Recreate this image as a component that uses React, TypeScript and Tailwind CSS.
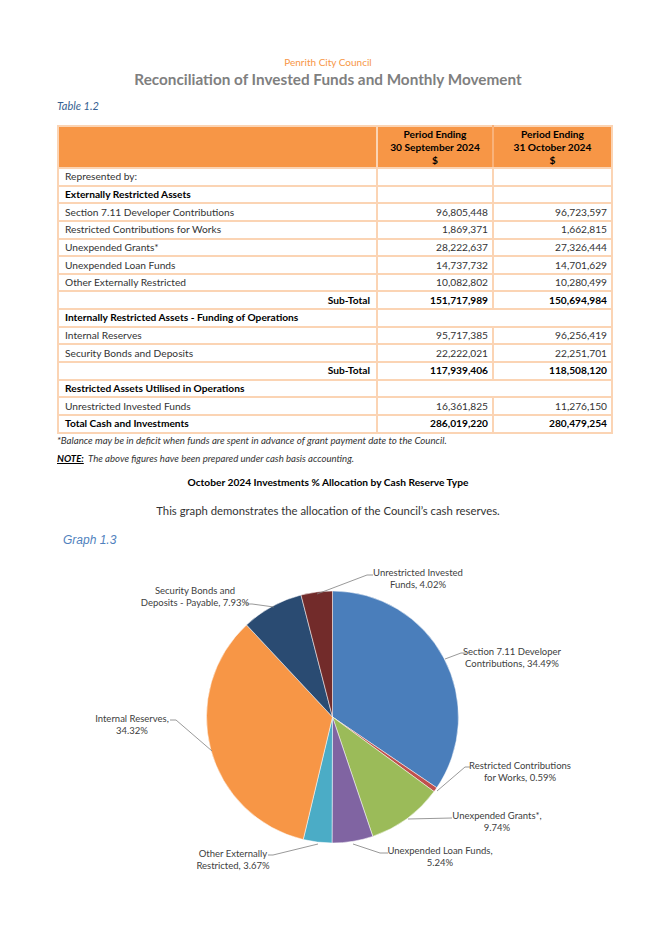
import React from "react";

type Row = {
  label: string;
  sep?: string;
  oct?: string;
  kind?: "plain" | "heading" | "headingWide" | "subtotal" | "total";
};

const rows: Row[] = [
  { label: "Represented by:", kind: "plain" },
  { label: "Externally Restricted Assets", kind: "heading" },
  { label: "Section 7.11 Developer Contributions", sep: "96,805,448", oct: "96,723,597" },
  { label: "Restricted Contributions for Works", sep: "1,869,371", oct: "1,662,815" },
  { label: "Unexpended Grants*", sep: "28,222,637", oct: "27,326,444" },
  { label: "Unexpended Loan Funds", sep: "14,737,732", oct: "14,701,629" },
  { label: "Other Externally Restricted", sep: "10,082,802", oct: "10,280,499" },
  { label: "Sub-Total", sep: "151,717,989", oct: "150,694,984", kind: "subtotal" },
  { label: "Internally Restricted Assets - Funding of Operations", kind: "headingWide" },
  { label: "Internal Reserves", sep: "95,717,385", oct: "96,256,419" },
  { label: "Security Bonds and Deposits", sep: "22,222,021", oct: "22,251,701" },
  { label: "Sub-Total", sep: "117,939,406", oct: "118,508,120", kind: "subtotal" },
  { label: "Restricted Assets Utilised in Operations", kind: "headingWide" },
  { label: "Unrestricted Invested Funds", sep: "16,361,825", oct: "11,276,150" },
  { label: "Total Cash and Investments", sep: "286,019,220", oct: "280,479,254", kind: "total" },
];

const slices = [
  { v: 34.49, c: "#4a7ebb" },
  { v: 0.59, c: "#c0504d" },
  { v: 9.74, c: "#9bbb59" },
  { v: 5.24, c: "#8064a2" },
  { v: 3.67, c: "#4bacc6" },
  { v: 34.32, c: "#f79646" },
  { v: 7.93, c: "#2a4b72" },
  { v: 4.02, c: "#722b2a" },
];

// label text lines, centre x, baselines, leader line
const labels = [
  { lines: ["Unrestricted Invested", "Funds, 4.02%"], x: 418, y: 574, lead: "373,573 367,573 317,592" },
  { lines: ["Security Bonds and", "Deposits - Payable, 7.93%"], x: 195, y: 592, lead: "246,602 252,602 274,605" },
  { lines: ["Section 7.11 Developer", "Contributions, 34.49%"], x: 512, y: 653, lead: "466,651 461,651 445,657" },
  { lines: ["Internal Reserves,", "34.32%"], x: 132, y: 720, lead: "170,718 176,718 212,749" },
  { lines: ["Restricted Contributions", "for Works, 0.59%"], x: 520, y: 767, lead: "470,765 465,765 437,789" },
  { lines: ["Unexpended Grants*,", "9.74%"], x: 497, y: 817, lead: "452,816 408,817" },
  { lines: ["Unexpended Loan Funds,", "5.24%"], x: 440, y: 852, lead: "388,851 380,851 353,842" },
  { lines: ["Other Externally", "Restricted, 3.67%"], x: 233, y: 855, lead: "268,853 273,853 318,842" },
];

function PieChart() {
  const cx = 332.5;
  const cy = 715;
  const r = 126;
  let acc = 0;
  const pt = (f: number) => {
    const a = f * 2 * Math.PI;
    return [cx + r * Math.sin(a), cy - r * Math.cos(a)];
  };
  return (
    <svg className="block" width="656" height="340" viewBox="0 546 656 340">
      {slices.map((s, i) => {
        const f0 = acc / 100;
        acc += s.v;
        const f1 = acc / 100;
        const [x0, y0] = pt(f0);
        const [x1, y1] = pt(f1);
        const large = f1 - f0 > 0.5 ? 1 : 0;
        return (
          <path
            key={i}
            d={`M${cx},${cy} L${x0},${y0} A${r},${r} 0 ${large} 1 ${x1},${y1} Z`}
            fill={s.c}
            stroke="#ffffff"
            strokeWidth="0.5"
          />
        );
      })}
      {labels.map((l, i) => (
        <g key={i}>
          <polyline points={l.lead} fill="none" stroke="#7f7f7f" strokeWidth="0.8" />
          {l.lines.map((t, j) => (
            <text
              key={j}
              x={l.x}
              y={l.y + j * 12}
              textAnchor="middle"
              fontSize="9.5"
              fill="#404040"
              fontFamily="Lato, sans-serif"
            >
              {t}
            </text>
          ))}
        </g>
      ))}
    </svg>
  );
}

export default function App() {
  const cell = "border-2 border-[#fbd4b4] px-[6px] py-0";
  return (
    <div className="w-[656px] h-[928px] bg-white font-['Lato',sans-serif] text-[#333]">
      <div className="pt-[55px] text-center">
        <p className="text-[10px] leading-[14px] text-[#f79646]">Penrith City Council</p>
        <p className="text-[15.3px] leading-[20px] font-bold text-[#7f7f7f]">
          Reconciliation of Invested Funds and Monthly Movement
        </p>
      </div>

      <div className="px-[57px]">
        <p className="mt-[10px] text-[11px] leading-[14px] italic text-[#365f91]">Table 1.2</p>

        <table className="mt-[12px] w-[554px] table-fixed border-collapse text-[10.2px]">
          <colgroup>
            <col className="w-[319px]" />
            <col className="w-[116px]" />
            <col className="w-[119px]" />
          </colgroup>
          <thead>
            <tr className="h-[42px] bg-[#f79646]">
              <th className="border-2 border-[#fbd4b4]" />
              <th className="border-2 border-[#fbd4b4] border-r-[#f9b27a] text-center font-bold leading-[13px] text-black">
                Period Ending
                <br />
                30 September 2024
                <br />$
              </th>
              <th className="border-2 border-[#fbd4b4] text-center font-bold leading-[13px] text-black">
                Period Ending
                <br />
                31 October 2024
                <br />$
              </th>
            </tr>
          </thead>
          <tbody>
            {rows.map((r, i) => {
              const bold = r.kind === "heading" || r.kind === "headingWide" || r.kind === "subtotal" || r.kind === "total";
              const txt = bold ? "font-bold text-black" : "";
              return (
                <tr key={i} className="h-[17.65px] leading-[13px]">
                  <td className={`${cell} ${txt} ${r.kind === "subtotal" ? "text-right" : ""}`}>{r.label}</td>
                  {r.kind === "headingWide" ? (
                    <td className={cell} colSpan={2} />
                  ) : (
                    <>
                      <td className={`${cell} pr-[4px] text-right ${txt}`}>{r.sep}</td>
                      <td className={`${cell} pr-[4px] text-right ${txt}`}>{r.oct}</td>
                    </>
                  )}
                </tr>
              );
            })}
          </tbody>
        </table>

        <p className="text-[9.7px] leading-[12px] italic text-[#333]">
          *Balance may be in deficit when funds are spent in advance of grant payment date to the Council.
        </p>
        <p className="mt-[7px] text-[9.6px] leading-[12px] italic text-[#333]">
          <span className="font-bold underline text-black">NOTE:</span>&nbsp; The above figures have been prepared under cash basis accounting.
        </p>
      </div>

      <p className="mt-[11px] text-center text-[10.2px] leading-[13px] font-bold text-black">
        October 2024 Investments % Allocation by Cash Reserve Type
      </p>
      <p className="mt-[14px] text-center text-[11.3px] leading-[16px] text-[#333]">
        This graph demonstrates the allocation of the Council’s cash reserves.
      </p>
      <p className="mt-[13px] pl-[63px] font-['Liberation_Sans',Arial,sans-serif] text-[12px] leading-[16px] italic text-[#4f81bd]">
        Graph 1.3
      </p>
      <PieChart />
    </div>
  );
}
